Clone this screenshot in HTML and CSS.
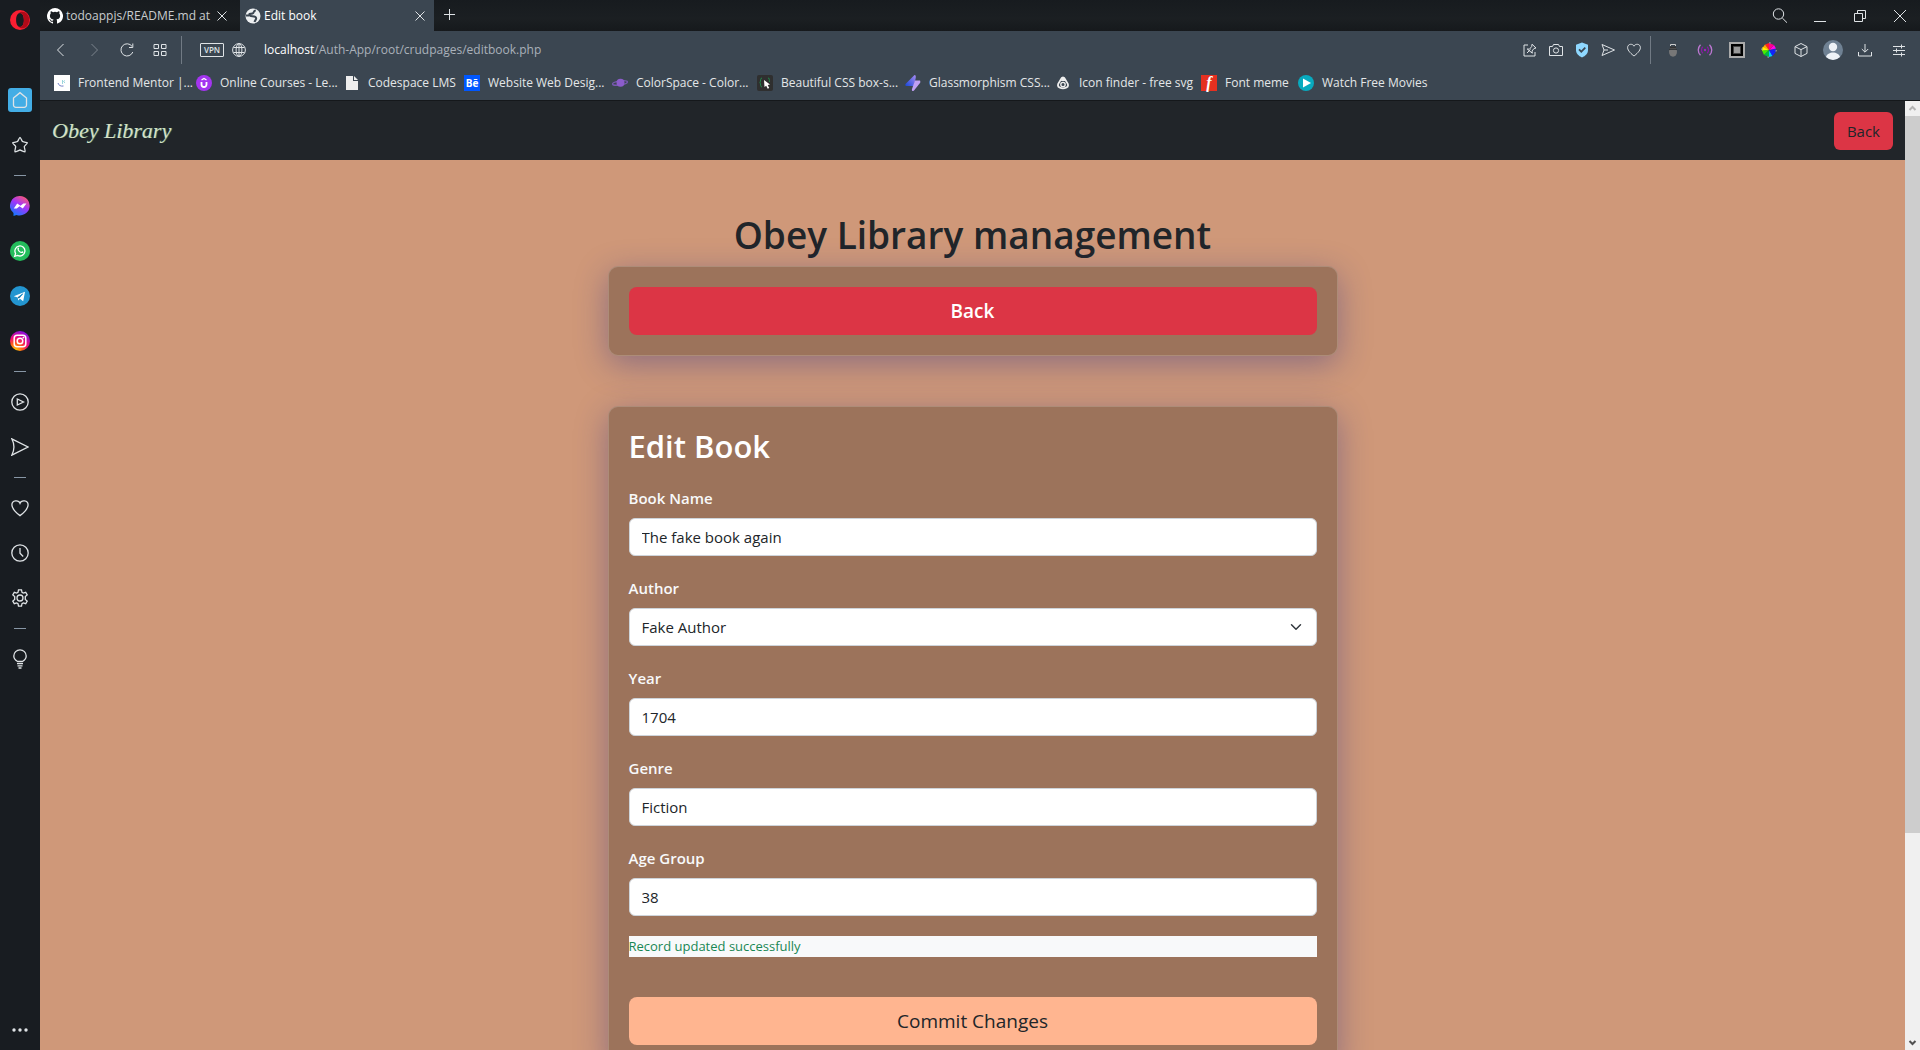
FILE: index.html
```html
<!DOCTYPE html>
<html lang="en">
<head>
<meta charset="utf-8">
<meta name="viewport" content="width=device-width, initial-scale=1">
<title>Edit book</title>
<link rel="stylesheet" href="styles.css">
</head>
<body>
<div class="browser">
  <nav class="sidebar" aria-label="Sidebar">
    <button class="opera" aria-label="Opera menu"><svg width="20" height="20" viewBox="0 0 20 20"><path fill="#fa1e32" fill-rule="evenodd" d="M10 0a10 10 0 1 0 0 20 10 10 0 0 0 0-20zm0 3c2.400 0 3.900 3 3.900 7s-1.500 7-3.900 7-3.900-3-3.900-7 1.500-7 3.900-7z"/><path fill="#b00a18" d="M10 3c2.400 0 3.900 3 3.900 7s-1.500 7-3.900 7c-.8 0-1.500-.3-2.100-.9C11 20 15 18 16.800 16.500a10 10 0 0 0 0-13C15 2 11 0 7.900 3.900 8.500 3.300 9.200 3 10 3z"/></svg></button>
    <button class="side-item home" aria-label="Home"><span class="home-tile"><svg class="line" width="18" height="18" viewBox="0 0 18 18"><path d="M2.500 7 9 1.700 15.500 7v7a2.300 2.300 0 0 1-2.300 2.300H4.800A2.300 2.300 0 0 1 2.500 14z"/></svg></span></button>
    <button class="side-item" aria-label="Bookmarks"><svg class="line" width="18" height="18" viewBox="0 0 18 18"><path d="M9 1.500c.6 0 2 3.700 2.500 4.100s4.700.6 4.900 1.200c.2.600-2.900 3-3.100 3.700s1.300 4.900.8 5.300S9.700 14 9 14s-4.600 2.200-5.100 1.800.9-4.600.8-5.300S1.400 7.400 1.600 6.800s4.400-.8 4.900-1.200S8.400 1.500 9 1.500z"/></svg></button>
    <span class="dash"></span>
    <button class="side-item" aria-label="Messenger"><svg width="20" height="20" viewBox="0 0 20 20"><defs><linearGradient id="msg" x1=".8" y1="0" x2=".2" y2="1"><stop offset="0" stop-color="#ff5c6c"/><stop offset=".45" stop-color="#a334fa"/><stop offset="1" stop-color="#0a7cff"/></linearGradient></defs><path fill="url(#msg)" d="M10 0a10 9.700 0 1 1-3.500 18.900L3.500 20v-2.900A9.700 9.700 0 0 1 10 0z"/><path fill="#fff" d="m3.800 12.500 3.400-5.100 3.300 2.300 2.900-2.300 3 .2-3.600 4.900-3.300-2.300-2.700 2.300z"/></svg></button>
    <button class="side-item" aria-label="WhatsApp"><svg width="20" height="20" viewBox="0 0 20 20"><circle cx="10" cy="10" r="10" fill="#24bd5c"/><path fill="none" stroke="#fff" stroke-width="1.300" d="m4.700 15.300.9-2.800a5 5 0 1 1 2 1.900z"/><path fill="#fff" d="M7.600 6.900c.6-.7 1.200-.2 1.400.6.200.7-.4.900-.2 1.300.5 1 1.200 1.700 2.300 2.100.4 0 .7-1 1.300-.7 1 .4 1.300.8.700 1.500-1.500 1.600-6.700-2-5.500-4.800z"/></svg></button>
    <button class="side-item" aria-label="Telegram"><svg width="20" height="20" viewBox="0 0 20 20"><circle cx="10" cy="10" r="10" fill="#2395d0"/><path fill="#fff" d="M3.800 10.300 15 5.800l-1.800 9.400-3.300-2.400-1.800 1.700-.3-3z"/><path stroke="#2395d0" stroke-width=".9" d="m7.900 11.500 4.900-3.700-3.800 4.500"/></svg></button>
    <button class="side-item" aria-label="Instagram"><svg width="20" height="20" viewBox="0 0 20 20"><defs><radialGradient id="ig" cx=".25" cy="1" r="1.100"><stop offset="0" stop-color="#ffdc00"/><stop offset=".35" stop-color="#ff5a1e"/><stop offset=".6" stop-color="#f00a78"/><stop offset="1" stop-color="#7a12f0"/></radialGradient></defs><circle cx="10" cy="10" r="10" fill="url(#ig)"/><rect x="4.200" y="4.200" width="11.600" height="11.600" rx="3" fill="none" stroke="#fff" stroke-width="1.500"/><circle cx="10" cy="10" r="2.800" fill="none" stroke="#fff" stroke-width="1.500"/><circle cx="13.400" cy="6.600" r=".9" fill="#fff"/></svg></button>
    <span class="dash"></span>
    <button class="side-item" aria-label="Player"><svg class="line" width="18" height="18" viewBox="0 0 18 18"><circle cx="9" cy="9" r="8.200"/><path d="M6.300 6v6l6.200-3z"/></svg></button>
    <button class="side-item" aria-label="My Flow"><svg class="line" width="18" height="18" viewBox="0 0 18 18"><path d="M.8.800 17 9 .8 17.200C3.500 12 3.500 6 .8.800z"/></svg></button>
    <span class="dash"></span>
    <button class="side-item" aria-label="Favorites"><svg class="line" width="18" height="18" viewBox="0 0 18 18"><path d="M9 4.200C7.800.900.900.700.900 6c0 4 5.400 8.800 8.100 10.600C11.700 14.800 17.100 10 17.100 6 17.100.700 10.200.900 9 4.200z"/></svg></button>
    <button class="side-item" aria-label="History"><svg class="line" width="18" height="18" viewBox="0 0 18 18"><circle cx="9" cy="9" r="8.200"/><path d="M9 4v5.200l3.200 3.300"/></svg></button>
    <button class="side-item" aria-label="Settings"><svg class="line" width="18" height="18" viewBox="0 0 18 18"><circle cx="9" cy="9" r="3"/><path d="M7.500.900h3l.5 2.500 1.300.7 2.400-.8 1.500 2.600-1.900 1.700v2.800l1.900 1.700-1.500 2.600-2.400-.8-1.300.7-.5 2.500h-3L7 14.600l-1.300-.7-2.400.8-1.500-2.600 1.900-1.700V7.600L1.800 5.900l1.500-2.600 2.400.8L7 3.400z"/></svg></button>
    <span class="dash"></span>
    <button class="side-item" aria-label="Tips"><svg class="line" width="16" height="20" viewBox="0 0 16 20"><path d="M5.500 12.500C3 11 1.800 9.300 1.800 7a6.200 6.200 0 0 1 12.400 0c0 2.300-1.200 4-3.700 5.500zM5 14.700h6M5.500 16.800h5M6.500 19h3"/></svg></button>
    <button class="side-more" aria-label="Sidebar setup"><svg width="18" height="6" viewBox="0 0 18 6" fill="#dfe3e6"><circle cx="3" cy="3" r="1.700"/><circle cx="9" cy="3" r="1.700"/><circle cx="15" cy="3" r="1.700"/></svg></button>
  </nav>

  <div class="window">
    <header class="tabstrip">
      <div class="tab">
        <svg width="16" height="16" viewBox="0 0 16 16"><path fill="#fff" d="M8 0a8 8 0 0 0-2.530 15.590c.4.070.55-.17.550-.38v-1.490c-2.230.48-2.700-.95-2.700-.95-.36-.92-.89-1.170-.89-1.170-.73-.5.060-.49.060-.49.800.060 1.230.83 1.230.83.720 1.230 1.870.87 2.330.67.070-.52.280-.87.510-1.070-1.780-.2-3.640-.89-3.640-3.950 0-.87.310-1.590.82-2.150-.08-.2-.36-1.020.080-2.120 0 0 .67-.21 2.200.82a7.600 7.600 0 0 1 4 0c1.530-1.040 2.200-.82 2.200-.82.440 1.100.16 1.920.080 2.120.51.560.82 1.270.82 2.150 0 3.070-1.870 3.750-3.650 3.950.29.250.54.730.54 1.480v2.190c0 .21.150.46.550.38A8 8 0 0 0 8 0z"/></svg>
        <span class="tab-title">todoappjs/README.md at</span>
        <button class="tab-close" aria-label="Close tab"><svg class="line" width="10" height="10" viewBox="0 0 10 10"><path d="m.5.500 9 9m0-9-9 9"/></svg></button>
      </div>
      <div class="tab active">
        <svg width="16" height="16" viewBox="0 0 16 16"><circle cx="8" cy="8" r="7.500" fill="#eceff1"/><path fill="none" stroke="#3b4651" stroke-width="2" d="M10.800 2.500C8 2.500 9.500 5 7.500 5.500S4 5 4.500 7s4 .5 6 2-.5 3-1 5M1 7.500h3"/></svg>
        <span class="tab-title">Edit book</span>
        <button class="tab-close" aria-label="Close tab"><svg class="line" width="10" height="10" viewBox="0 0 10 10"><path d="m.5.500 9 9m0-9-9 9"/></svg></button>
      </div>
      <button class="new-tab" aria-label="New tab"><svg class="line" width="11" height="11" viewBox="0 0 11 11"><path d="M5.500 0v11M0 5.500h11"/></svg></button>
      <div class="window-controls">
        <button aria-label="Search tabs"><svg class="line" width="16" height="16" viewBox="0 0 16 16"><circle cx="6.500" cy="6" r="5.200"/><path d="m10.300 10 4.700 4.700"/></svg></button>
        <button class="minimize" aria-label="Minimize"><svg class="line" width="12" height="12" viewBox="0 0 12 12"><path d="M0 11.500h12"/></svg></button>
        <button aria-label="Restore"><svg class="line" width="12" height="12" viewBox="0 0 12 12"><path d="M.5 3.500h8v8h-8zM3.500 3.500v-3h8v8h-3"/></svg></button>
        <button aria-label="Close"><svg class="line" width="12" height="12" viewBox="0 0 12 12"><path d="m0 0 12 12M12 0 0 12"/></svg></button>
      </div>
    </header>

    <div class="toolbar">
      <div class="nav-buttons">
        <button aria-label="Back"><svg class="line" width="14" height="14" viewBox="0 0 14 14"><path d="M9.500 1 3.500 7l6 6"/></svg></button>
        <button class="dim" aria-label="Forward"><svg class="line" width="14" height="14" viewBox="0 0 14 14"><path d="m4.500 1 6 6-6 6"/></svg></button>
        <button aria-label="Reload"><svg class="line" width="14" height="14" viewBox="0 0 14 14"><path d="M12.800 9A6.100 6.100 0 1 1 12 3.300M12.800.500v4H9"/></svg></button>
        <button aria-label="Speed dial"><svg class="line" width="14" height="12" viewBox="0 0 14 12"><path d="M1 .5h4.500v4H1zM8.500.500H13v4H8.500zM1 7.500h4.500v4H1zM8.500 7.500H13v4H8.500z"/></svg></button>
      </div>
      <span class="divider"></span>
      <div class="address">
        <button class="vpn">VPN</button>
        <svg class="line" width="14" height="14" viewBox="0 0 14 14"><circle cx="7" cy="7" r="6.400"/><ellipse cx="7" cy="7" rx="2.900" ry="6.400"/><path d="M1.400 4.500h11.200M1.400 9.500h11.200M7 .5v13"/></svg>
        <span class="url"><b>localhost</b>/Auth-App/root/crudpages/editbook.php</span>
      </div>
      <div class="page-actions">
        <button aria-label="Edit page"><svg class="line" width="14" height="14" viewBox="0 0 14 14"><path d="M5 2H1v11h11V9M4 10l3.500-3.500M9 1.200l4 3.800-2 .5-2 2.500.3 2.200L4.200 6l2.300.2L8.700 3.500z"/></svg></button>
        <button aria-label="Snapshot"><svg class="line" width="14" height="14" viewBox="0 0 14 14"><path d="M.5 3.500h3l1-2h5l1 2h3v9H.5z"/><circle cx="7" cy="7.500" r="2.600"/></svg></button>
        <button aria-label="Ad blocker"><svg width="14" height="16" viewBox="0 0 14 16"><path fill="#8fd8ff" d="M7 .6 13 2.800V8c0 3.500-2.500 6-6 7.400C3.500 14 1 11.500 1 8V2.800z"/><path d="m4 7.300 2.300 2.400 4-4" fill="none" stroke="#3b4651" stroke-width="1.700"/></svg></button>
        <button aria-label="Send to flow"><svg class="line" width="14" height="14" viewBox="0 0 14 14"><path d="m1 1.500 12.500 5.500L1 12.500 3 7zM3 7h4"/></svg></button>
        <button aria-label="Add to bookmarks"><svg class="line" width="14" height="14" viewBox="0 0 14 14"><path d="M7 3.200C6 .5.600.400.600 4.700c0 3 4.200 6.700 6.400 8.300 2.200-1.600 6.400-5.300 6.400-8.300C13.400.400 8 .5 7 3.200z"/></svg></button>
      </div>
      <span class="divider"></span>
      <div class="extensions">
        <button aria-label="Cursor extension"><svg width="10" height="16" viewBox="0 0 10 16"><path d="M2.500 4V2.500h5V4" fill="none" stroke="#ccc"/><ellipse cx="5" cy="9.800" rx="4" ry="5" fill="#777"/><path d="M1 7.300h8" stroke="#292c2f"/><path d="M2 5.500h6" stroke="#343434" stroke-width="2"/></svg></button>
        <button aria-label="Signal extension"><svg width="16" height="12" viewBox="0 0 16 12" fill="none" stroke-width="1.300"><path stroke="#bd78d2" d="M3.500.700c-3 3-3 7.600 0 10.600m9-10.600c3 3 3 7.600 0 10.600"/><path stroke="#8b18a8" d="M6 2.700C4 4 4 8 6 9.300m4-6.600C12 4 12 8 10 9.300"/><circle cx="8" cy="6" r="1.200" fill="#a020c0"/></svg></button>
        <button aria-label="Frame extension"><svg width="16" height="16" viewBox="0 0 16 16"><path fill="#aaa" d="M0 0h16v16H0z"/><path fill="#000" d="M2 2h12v12H2z"/><path fill="#999" stroke="#444" d="M4.500 4.500h7v7h-7z"/></svg></button>
        <button aria-label="Color picker"><svg width="16" height="16" viewBox="0 0 16 16"><path fill="#f22" d="M8 8V1l-4 1.400z"/><path fill="#fa0" d="M8 8 4 2.400 1.500 6z"/><path fill="#fff200" d="M8 8 1.500 5 1 9z"/><path fill="#4e0" d="M8 8 1 8.500 3 13z"/><path fill="#0b4" d="M8 8 3 13l5 2z"/><path fill="#0cf" d="M8 8v7l3.500-1z"/><path fill="#12f" d="m8 8 3.500 6 3.200-4z"/><path fill="#12f" d="m8 8 6.700 2V7z"/><path fill="#f0e" d="m8 8 7-1.500L13 3z"/><path fill="#f08" d="m8 8 5-5-5-2z"/><circle cx="8" cy="8" r="7.200" fill="none" stroke="#bbb" stroke-dasharray="1.500 9.800"/></svg></button>
        <button aria-label="Extensions"><svg class="line" width="14" height="14" viewBox="0 0 14 14"><path d="M7 .5 13 3.600v6.800L7 13.500 1 10.400V3.600zM1 3.600l6 3 6-3M7 6.600v6.900"/></svg></button>
        <button aria-label="Profile"><svg width="20" height="20" viewBox="0 0 20 20"><circle cx="10" cy="10" r="10" fill="#6f8193"/><circle cx="10" cy="7" r="4.200" fill="#eef2f7"/><path fill="#eef2f7" d="M3 17.100c1.500-6 12.500-6 14 0a10 10 0 0 1-14 0z"/></svg></button>
        <button aria-label="Downloads"><svg class="line" width="14" height="14" viewBox="0 0 14 14"><path d="M7 1v8M3.800 6 7 9.200 10.200 6M.5 9v4h13V9"/></svg></button>
        <button class="setup" aria-label="Easy setup"><svg class="line" width="14" height="14" viewBox="0 0 14 14"><path d="M1 3.500h12M1 7.500h12M1 11.500h12M9.500 1.500v4M4.500 5.500v4M9.500 9.500v4"/></svg></button>
      </div>
    </div>

    <nav class="bookmarks" aria-label="Bookmarks bar">
      <a href="#"><svg width="16" height="16" viewBox="0 0 16 16"><path fill="#fff" d="M0 0h16v16H0z"/><path d="M4 8c.6 2.500 3 3.500 5.500 3" fill="none" stroke="#7180c8"/><path d="M8.500 5v4M11 5.500l-1.500 1 1.500 1.500" fill="none" stroke="#9bd5dc"/></svg>Frontend Mentor |...</a>
      <a href="#"><svg width="16" height="16" viewBox="0 0 16 16"><circle cx="8" cy="8" r="8" fill="#a435f0"/><path d="M5.500 7v2.500a2.500 2.500 0 0 0 5 0V7" fill="none" stroke="#fff" stroke-width="1.800"/><path d="M5.500 5 8 3.400 10.500 5" fill="none" stroke="#fff" stroke-width="1.300"/></svg>Online Courses - Le...</a>
      <a href="#"><svg width="16" height="16" viewBox="0 0 16 16"><path fill="#eee" d="M2 1h7v5h5v9H2zM10 1l4 4h-4z"/></svg>Codespace LMS</a>
      <a href="#"><span class="behance">Bē</span>Website Web Desig...</a>
      <a href="#"><svg width="16" height="16" viewBox="0 0 16 16"><ellipse cx="8" cy="8" rx="7.500" ry="2" fill="none" stroke="#7a58b4" stroke-width="1.300" transform="rotate(-8 8 8)"/><circle cx="8.500" cy="7.800" r="4" fill="#8c5ccc"/></svg>ColorSpace - Color...</a>
      <a href="#"><svg width="16" height="16" viewBox="0 0 16 16"><rect width="16" height="16" rx="2" fill="#2f2f2f"/><path d="M5 3c-2 0-1 3-2 4.500C4 9 3 12 5 12m6-9c2 0 1 2 1.500 4" fill="none" stroke="#1f8a4a"/><path fill="#fff" d="m7 5 6 4.500-2.300.5 1.500 3-1.500.8-1.500-3L7.500 12z"/></svg>Beautiful CSS box-s...</a>
      <a href="#"><svg width="16" height="16" viewBox="0 0 16 16"><defs><linearGradient id="gl" x1="1" y1="0" x2="0" y2="1"><stop offset="0" stop-color="#a98bf2"/><stop offset="1" stop-color="#1747d8"/></linearGradient></defs><path fill="url(#gl)" d="M9.500 0C11 0 11 2 10.500 4L9 11H1.500C0 11 0 9.500 1 8.500z"/><path fill="#c0a0f4" d="M10 5.500h4.500c1 0 1 1.500.5 2.500L9 15.500c-1.500 1.500-2.500 0-2-1.500z"/></svg>Glassmorphism CSS...</a>
      <a href="#"><svg width="16" height="16" viewBox="0 0 16 16"><path fill="none" stroke="#eee" stroke-width="1.800" d="M8 2.500c2 0 2.500 3 4 5s1.500 4-.5 5-5 1-7 0-2-3-.5-5 2-5 4-5z"/><path fill="#eee" d="M6.500 3h3.500v3H6z"/><circle cx="8" cy="9.500" r="2.200" fill="none" stroke="#eee" stroke-width="1.300"/></svg>Icon finder - free svg</a>
      <a href="#"><span class="fontmeme">f</span>Font meme</a>
      <a href="#"><svg width="16" height="16" viewBox="0 0 16 16"><circle cx="8" cy="8" r="8" fill="#08aabf"/><path fill="#fff" d="m5 3.500 8 4.500-8 4.500z"/></svg>Watch Free Movies</a>
    </nav>

    <div class="viewport">
      <div class="page">
        <header class="navbar">
          <a class="brand" href="#">Obey Library</a>
          <a class="btn nav-back" href="#">Back</a>
        </header>
        <main class="content">
          <h1>Obey Library management</h1>
          <section class="card">
            <a class="btn btn-lg btn-danger" href="#">Back</a>
          </section>
          <form class="card">
            <h2>Edit Book</h2>
            <div class="field"><label for="name">Book Name</label><input id="name" type="text" value="The fake book again"></div>
            <div class="field"><label for="author">Author</label><select id="author"><option>Fake Author</option></select></div>
            <div class="field"><label for="year">Year</label><input id="year" type="text" value="1704"></div>
            <div class="field"><label for="genre">Genre</label><input id="genre" type="text" value="Fiction"></div>
            <div class="field"><label for="age">Age Group</label><input id="age" type="text" value="38"></div>
            <p class="message">Record updated successfully</p>
            <button class="btn btn-lg btn-commit" type="button">Commit Changes</button>
          </form>
        </main>
      </div>
      <div class="scrollbar" aria-hidden="true">
        <svg width="15" height="15" viewBox="0 0 15 15"><path d="M4.500 9 7.500 6l3 3" fill="none" stroke="#b4b4b4" stroke-width="2"/></svg>
        <div class="track"><div class="thumb"></div></div>
        <svg width="15" height="15" viewBox="0 0 15 15"><path d="m4.500 6 3 3 3-3" fill="none" stroke="#505050" stroke-width="2"/></svg>
      </div>
    </div>
  </div>
</div>
</body>
</html>
```
FILE: styles.css
```css
* { box-sizing: border-box; }

body {
  margin: 0;
  font-family: "Open Sans", "Noto Sans", sans-serif;
  font-size: 15px;
  line-height: 24px;
  color: #212529;
}

button {
  margin: 0;
  padding: 0;
  border: 0;
  background: none;
  color: inherit;
  font: inherit;
}

a { color: inherit; text-decoration: none; }
svg { display: block; flex: none; }

.line { fill: none; stroke: #dfe3e6; stroke-width: 1; }

.browser { display: flex; height: 100vh; overflow: hidden; background: #181c21; }

/* Sidebar */
.sidebar {
  display: flex;
  flex-direction: column;
  align-items: center;
  flex: none;
  width: 40px;
  padding: 10px 0;
  background: #181c21;
}
.sidebar .line { stroke-width: 1.3; }
.opera { height: 20px; margin-bottom: 47px; }
.side-item {
  display: flex;
  align-items: center;
  justify-content: center;
  flex: none;
  width: 40px;
  height: 45px;
}
.home-tile {
  display: flex;
  align-items: center;
  justify-content: center;
  width: 24px;
  height: 24px;
  border-radius: 3px;
  background: #43ade5;
}
.dash { flex: none; width: 12px; height: 1px; margin: 8px 0 7px; background: #8796a5; }
.side-more { display: flex; margin-top: auto; padding: 7px 0; }

/* Tabs */
.window { display: flex; flex-direction: column; flex: 1; min-width: 0; }
.tabstrip {
  display: flex;
  flex: none;
  height: 31px;
  background: linear-gradient(#171b1f, #1b1f22 60%, #16191c);
}
.tab {
  display: flex;
  align-items: center;
  gap: 3px;
  width: 200px;
  padding: 0 12px 0 7px;
  color: #c9ccce;
  font-size: 12px;
}
.tab.active { width: 194px; padding: 0 8px 0 5px; background: #3b4651; color: #fff; }
.tab-title { flex: 1; white-space: nowrap; }
.tab-close { padding: 0 1px; }
.new-tab { padding: 0 10px 2px; }
.window-controls { display: flex; margin-left: auto; }
.window-controls button { display: flex; align-items: center; justify-content: center; width: 40px; }

/* Address bar */
.toolbar { display: flex; flex: none; align-items: center; height: 38px; background: #3b4651; }
.nav-buttons { display: flex; padding: 0 5px 0 4px; }
.nav-buttons button { display: flex; align-items: center; justify-content: center; width: 33px; }
.dim { opacity: .4; }
.divider { width: 1px; height: 28px; background: #717a84; }
.address { display: flex; align-items: center; gap: 8px; flex: 1; padding-left: 18px; }
.vpn {
  width: 24px;
  height: 14px;
  border: 1px solid #dfe3e6;
  border-radius: 1px;
  color: #dfe3e6;
  font-size: 8px;
  font-weight: 600;
  line-height: 12px;
}
.url { padding-left: 10px; color: #aab1ba; font-size: 12px; }
.url b { color: #fff; font-weight: 400; }
.page-actions { display: flex; padding-right: 3px; }
.page-actions button { display: flex; align-items: center; justify-content: center; width: 26px; }
.extensions { display: flex; padding-right: 3px; padding-left: 6px; }
.extensions button { display: flex; align-items: center; justify-content: center; width: 32px; }
.extensions .setup { width: 36px; }

/* Bookmarks */
.bookmarks {
  display: grid;
  grid-template-columns: 142px 148px 120px 148px 145px 148px 150px 146px 97px auto;
  flex: none;
  height: 32px;
  padding: 0 0 3px 14px;
  border-bottom: 1px solid #15181b;
  background: #3b4651;
  color: #e4e6e8;
  font-size: 12px;
  white-space: nowrap;
}
.bookmarks a { display: flex; align-items: center; gap: 8px; }
.behance, .fontmeme { width: 16px; height: 16px; line-height: 16px; text-align: center; color: #fff; font-weight: 700; }
.behance { background: #0057ff; font-size: 10px; }
.fontmeme { background: #e53020; font: italic 700 16px/16px "Liberation Serif", serif; }

/* Page */
.viewport { display: flex; flex: 1; min-height: 0; }
.page { flex: 1; overflow: hidden; background: #cf9879; }
.navbar {
  display: flex;
  align-items: center;
  justify-content: space-between;
  height: 59px;
  padding: 0 12px;
  background: #212529;
}
.brand {
  color: #d9e0c4;
  font: italic 22px/30px "Liberation Serif", serif;
  text-shadow: 1px 0 rgba(70, 184, 164, .5);
}
.btn { display: block; border-radius: 6px; text-align: center; }
.nav-back { padding: 7px 13px; background: #dc3545; }
.content { display: flex; flex-direction: column; align-items: center; padding-top: 51px; }
h1, h2, p { margin: 0; }
h1 { margin-bottom: 7px; font-size: 37px; font-weight: 600; line-height: 48px; }
.card {
  width: calc(40% - 16px);
  margin-bottom: 50px;
  padding: 20px;
  border: 1px solid rgba(255, 255, 255, .18);
  border-radius: 10px;
  background: #9c735b;
  box-shadow: 0 8px 32px rgba(31, 38, 135, .37);
}
.btn-lg { width: 100%; padding: 9px 16px; border-radius: 8px; font-size: 19px; line-height: 30px; }
.btn-danger { background: #dc3545; color: #fff; font-weight: 600; }
.btn-commit { background: #ffb590; }
h2 { margin-bottom: 20px; color: #fff; font-size: 31px; font-weight: 600; line-height: 39px; }
.field { display: flex; flex-direction: column; gap: 8px; margin-bottom: 20px; }
label { color: #f8f9fa; font-weight: 600; }
input, select {
  width: 100%;
  height: 38px;
  padding: 0 12px;
  border: 1px solid #ced4da;
  border-radius: 6px;
  background-color: #fff;
  color: #212529;
  font: inherit;
}
select {
  appearance: none;
  background-image: url("data:image/svg+xml,%3Csvg xmlns='http://www.w3.org/2000/svg' viewBox='0 0 16 16'%3E%3Cpath fill='none' stroke='%23343a40' stroke-linecap='round' stroke-linejoin='round' stroke-width='2' d='m2 5 6 6 6-6'/%3E%3C/svg%3E");
  background-position: right 14px center;
  background-repeat: no-repeat;
  background-size: 12px;
}
.message { margin-bottom: 40px; background: #f8f9fa; color: #198754; font-size: 13px; line-height: 21px; }

/* Scrollbar */
.scrollbar { display: flex; flex-direction: column; flex: none; width: 15px; background: #f0f0f0; }
.track { flex: 1; }
.thumb { height: 78%; background: #cdcdcd; }
```
